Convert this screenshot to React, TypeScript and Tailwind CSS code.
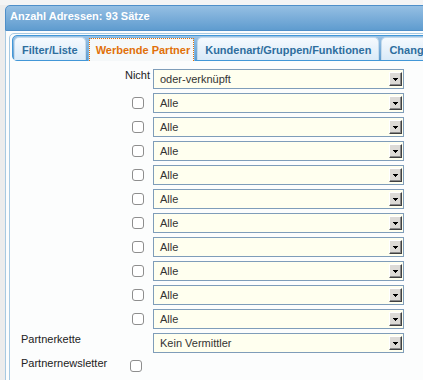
import React from 'react'

const tabs = ['Filter/Liste', 'Werbende Partner', 'Kundenart/Gruppen/Funktionen', 'Changelog']
const ACTIVE = 1

function Checkbox({ className = '' }: { className?: string }) {
  return <span className={'block w-[12px] h-[12px] rounded-[3px] border border-[#8e8e8e] bg-white ' + className} />
}

function Select({ value }: { value: string }) {
  return (
    <div className="h-[20px] border border-[#7f9db9] bg-[#ffffef] flex items-center pl-[6px] pr-[1px]">
      <span className="flex-1 text-[11px] leading-[13px] text-[#333]">{value}</span>
      <span className="w-[13px] h-[14px] bg-[#dcdad6] border border-t-white border-l-white border-r-[#404040] border-b-[#404040] shadow-[inset_-1px_-1px_0_#8a8a8a] flex items-center justify-center">
        <svg width="5" height="3" shapeRendering="crispEdges" className="mt-[1px]">
          <rect x="0" y="0" width="5" height="1" fill="#000" />
          <rect x="1" y="1" width="3" height="1" fill="#000" />
          <rect x="2" y="2" width="1" height="1" fill="#000" />
        </svg>
      </span>
    </div>
  )
}

export default function App() {
  return (
    <div className="w-[423px] h-[380px] overflow-hidden bg-[#ececec] font-['Liberation_Sans',Arial,sans-serif]">
      {/* clipped line above the panel */}
      <div className="h-[5px] overflow-hidden pl-[68px] bg-[#f4f4f4]">
        <div className="-mt-[9px] text-[11px] leading-[11px] text-[#333] whitespace-nowrap">Platzhalter Kundenname</div>
      </div>

      <div className="ml-[5px] w-[700px]">
        <div className="h-[26px] border border-[#4f8fc9] rounded-tl-[5px] bg-linear-to-b from-[#95bfe3] to-[#5f9ccf] pl-[4px] pt-[4px] text-[11px] leading-[13px] font-bold text-white">
          Anzahl Adressen: 93 Sätze
        </div>

        <div className="border-l border-[#a6c9e2] bg-[#fcfdfd] pl-[3px] pt-[2px] h-[360px]">
          <div className="border border-[#a6c9e2] rounded-[5px] px-[2px] pt-[1px] h-full">
            {/* tab nav */}
            <div className="border border-[#4297d7] rounded-[5px] bg-linear-to-b from-[#9cc4e7] to-[#5f9ccf] pl-[1px] pt-[1px] flex items-start gap-[2px]">
              {tabs.map((t, i) =>
                i === ACTIVE ? (
                  <div key={t} className="h-[24px] -mb-px border border-b-0 border-[#79b7e7] rounded-t-[5px] bg-[#f5f8f9] shrink-0">
                    <div className="h-full border border-b-0 border-dotted border-[#e17009] pl-[6px] pr-[3px] pt-[5px] text-[11px] leading-[13px] font-bold text-[#e17009] whitespace-nowrap">
                      {t}
                    </div>
                  </div>
                ) : (
                  <div key={t} className="h-[23px] border border-b-0 border-[#c5dbec] rounded-t-[5px] bg-linear-to-b from-[#f6fafe] to-[#d9eaf8] shrink-0">
                    <div className="h-full border border-transparent px-[6px] pt-[5px] text-[11px] leading-[13px] font-bold text-[#2e6e9e] whitespace-nowrap">
                      {t}
                    </div>
                  </div>
                )
              )}
            </div>

            {/* form */}
            <div className="pl-[9px] pt-[8px] grid grid-cols-[98px_30px_251px] gap-x-[2px] gap-y-[4px] text-[11px] leading-[13px] text-[#222]">
              <div />
              <div className="text-right pr-[1px]">Nicht</div>
              <Select value="oder-verknüpft" />

              {Array.from({ length: 10 }).map((_, i) => (
                <React.Fragment key={i}>
                  <div />
                  <div className="flex justify-end pr-[7px]">
                    <Checkbox className="mt-[4px]" />
                  </div>
                  <Select value="Alle" />
                </React.Fragment>
              ))}

              <div>Partnerkette</div>
              <div />
              <Select value="Kein Vermittler" />

              <div className="whitespace-nowrap">Partnernewsletter</div>
              <div className="flex justify-end pr-[9px]">
                <Checkbox className="mt-[3px]" />
              </div>
              <div />
            </div>
          </div>
        </div>
      </div>
    </div>
  )
}
